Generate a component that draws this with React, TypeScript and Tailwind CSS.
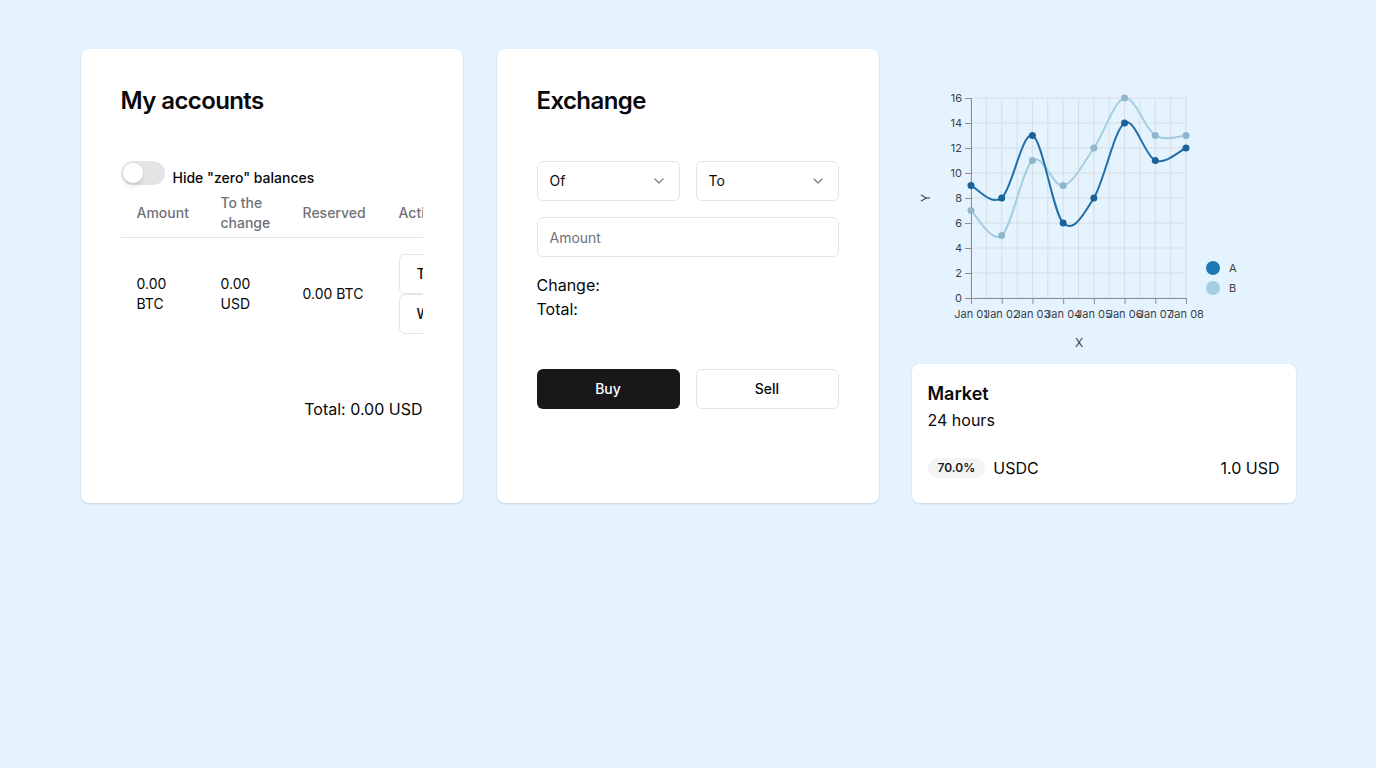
import React, { useState } from 'react';
import { ChevronDown } from 'lucide-react';

const labels = ['Jan 01', 'Jan 02', 'Jan 03', 'Jan 04', 'Jan 05', 'Jan 06', 'Jan 07', 'Jan 08'];
const seriesA = [9, 8, 13, 6, 8, 14, 11, 12];
const seriesB = [7, 5, 11, 9, 12, 16, 13, 13];

// plot box inside the svg
const X0 = 59;
const X1 = 274;
const Y0 = 249;
const Y1 = 49;
const xAt = (i: number) => X0 + ((X1 - X0) / 7) * i;
const yAt = (v: number) => Y0 - ((Y0 - Y1) / 16) * v;

// catmull-rom -> cubic bezier
const smoothPath = (vals: number[]) => {
  const pts = vals.map((v, i) => [xAt(i), yAt(v)]);
  let d = `M${pts[0][0]},${pts[0][1]}`;
  for (let i = 0; i < pts.length - 1; i++) {
    const p0 = pts[i - 1] || pts[i];
    const p1 = pts[i];
    const p2 = pts[i + 1];
    const p3 = pts[i + 2] || p2;
    const c1x = p1[0] + (p2[0] - p0[0]) / 6;
    const c1y = p1[1] + (p2[1] - p0[1]) / 6;
    const c2x = p2[0] - (p3[0] - p1[0]) / 6;
    const c2y = p2[1] - (p3[1] - p1[1]) / 6;
    d += ` C${c1x},${c1y} ${c2x},${c2y} ${p2[0]},${p2[1]}`;
  }
  return d;
};

const Chart: React.FC = () => {
  const yTicks = [0, 2, 4, 6, 8, 10, 12, 14, 16];
  return (
    <svg width="384" height="299" className="block" fontFamily="Inter, sans-serif">
      {/* grid */}
      {Array.from({ length: 15 }).map((_, i) => {
        const x = X0 + ((X1 - X0) / 14) * i;
        return <line key={'v' + i} x1={x} x2={x} y1={Y1} y2={Y0} stroke="#d9dde2" strokeWidth="1" />;
      })}
      {yTicks.map((t) => (
        <line key={'h' + t} x1={X0} x2={X1} y1={yAt(t)} y2={yAt(t)} stroke="#d9dde2" strokeWidth="1" />
      ))}
      {/* axes */}
      <path d={`M${X0 - 6},${Y1 + 0.5}H${X0 + 0.5}V${Y0 + 0.5}H${X0 - 6}`} fill="none" stroke="#8a8f96" />
      <path d={`M${X0 + 0.5},${Y0 + 6}V${Y0 + 0.5}H${X1 + 0.5}V${Y0 + 6}`} fill="none" stroke="#8a8f96" />
      {yTicks.map((t) => (
        <g key={'yt' + t}>
          <line x1={X0 - 6} x2={X0} y1={yAt(t) + 0.5} y2={yAt(t) + 0.5} stroke="#8a8f96" />
          <text x={X0 - 9} y={yAt(t)} dy="0.35em" textAnchor="end" fontSize="11" fill="#3f3f46">
            {t}
          </text>
        </g>
      ))}
      {labels.map((l, i) => (
        <g key={l}>
          <line x1={xAt(i) + 0.5} x2={xAt(i) + 0.5} y1={Y0} y2={Y0 + 6} stroke="#8a8f96" />
          <text x={xAt(i)} y={Y0 + 20} textAnchor="middle" fontSize="11" fill="#3f3f46">
            {l}
          </text>
        </g>
      ))}
      <text x="167" y="298" textAnchor="middle" fontSize="12" fill="#3f3f46">X</text>
      <text transform="translate(18,149) rotate(-90)" textAnchor="middle" fontSize="12" fill="#3f3f46">Y</text>

      {/* series */}
      <path d={smoothPath(seriesB)} fill="none" stroke="#a6cee3" strokeWidth="2" />
      {seriesB.map((v, i) => (
        <circle key={'b' + i} cx={xAt(i)} cy={yAt(v)} r="3.5" fill="#91b6cc" />
      ))}
      <path d={smoothPath(seriesA)} fill="none" stroke="#1f6fa9" strokeWidth="2" />
      {seriesA.map((v, i) => (
        <circle key={'a' + i} cx={xAt(i)} cy={yAt(v)} r="3.5" fill="#1a6399" />
      ))}

      {/* legend */}
      <circle cx="301" cy="219" r="7" fill="#1f78b4" />
      <text x="317" y="219" dy="0.35em" fontSize="11" fill="#3f3f46">A</text>
      <circle cx="301" cy="239" r="7" fill="#a6cee3" />
      <text x="317" y="239" dy="0.35em" fontSize="11" fill="#3f3f46">B</text>
    </svg>
  );
};

const Accounts: React.FC = () => {
  const [hideZero, setHideZero] = useState(false);
  return (
    <div className="bg-white rounded-lg shadow-sm px-10 pt-9">
      <h2 className="text-2xl leading-8 font-semibold tracking-tight text-[#09090b]">My accounts</h2>
      <div className="mt-11 flex items-start gap-2">
        <button
          onClick={() => setHideZero(!hideZero)}
          className={`w-11 h-6 rounded-full p-0.5 flex ${hideZero ? 'bg-[#18181b] justify-end' : 'bg-[#e4e4e7] justify-start'}`}
        >
          <span className="w-5 h-5 rounded-full bg-white shadow-md" />
        </button>
        <span className="pt-[7px] text-sm leading-5 font-medium text-[#09090b]">Hide "zero" balances</span>
      </div>
      <div className="mt-1 w-[302px] overflow-hidden">
        <table className="table-fixed w-[420px] text-sm text-left">
          <colgroup>
            <col className="w-[84px]" />
            <col className="w-[82px]" />
            <col className="w-[96px]" />
            <col className="w-[158px]" />
          </colgroup>
          <thead>
            <tr className="border-b border-[#e4e4e7] text-[#71717a]">
              <th className="px-4 pt-px pb-1 font-medium align-middle">Amount</th>
              <th className="px-4 pt-px pb-1 font-medium align-middle">To the change</th>
              <th className="px-4 pt-px pb-1 font-medium align-middle">Reserved</th>
              <th className="px-4 pt-px pb-1 font-medium align-middle whitespace-nowrap">Actions</th>
            </tr>
          </thead>
          <tbody className="text-[#09090b]">
            <tr>
              <td className="px-4 py-4 align-middle">0.00 BTC</td>
              <td className="px-4 py-4 align-middle">0.00 USD</td>
              <td className="px-4 py-4 align-middle whitespace-nowrap">0.00 BTC</td>
              <td className="px-4 py-4 align-middle">
                <div className="flex flex-col items-start">
                  <button className="h-10 px-[17px] rounded-md border border-[#e4e4e7] bg-white text-sm font-medium">Transfer</button>
                  <button className="h-10 px-[17px] rounded-md border border-[#e4e4e7] bg-white text-sm font-medium">Withdraw</button>
                </div>
              </td>
            </tr>
          </tbody>
        </table>
      </div>
      <p className="mt-[47px] text-right text-base leading-6 text-[#09090b]">Total: 0.00 USD</p>
    </div>
  );
};

const Exchange: React.FC = () => (
  <div className="ml-px bg-white rounded-lg shadow-sm px-10 pt-9">
    <h2 className="text-2xl leading-8 font-semibold tracking-tight text-[#09090b]">Exchange</h2>
    <div className="mt-11 grid grid-cols-2 gap-4">
      <button className="h-10 rounded-md border border-[#e4e4e7] px-3 flex items-center justify-between text-sm text-[#09090b]">
        Of
        <ChevronDown className="w-4 h-4 opacity-50" />
      </button>
      <button className="h-10 rounded-md border border-[#e4e4e7] px-3 flex items-center justify-between text-sm text-[#09090b]">
        To
        <ChevronDown className="w-4 h-4 opacity-50" />
      </button>
    </div>
    <input
      placeholder="Amount"
      className="mt-4 w-full h-10 rounded-md border border-[#e4e4e7] px-3 text-sm placeholder:text-[#71717a] outline-none"
    />
    <div className="mt-4 text-base leading-6 text-[#09090b]">
      <p>Change:</p>
      <p>Total:</p>
    </div>
    <div className="mt-12 grid grid-cols-2 gap-4">
      <button className="h-10 rounded-md bg-[#18181b] text-white text-sm font-medium">Buy</button>
      <button className="h-10 rounded-md border border-[#e4e4e7] bg-white text-sm font-medium text-[#09090b]">Sell</button>
    </div>
  </div>
);

const Market: React.FC = () => (
  <div className="bg-white rounded-lg shadow-sm px-4 pt-4 pb-[23px]">
    <h3 className="text-lg leading-7 font-semibold text-[#09090b]">Market</h3>
    <p className="text-base leading-6 text-[#09090b]">24 hours</p>
    <div className="mt-6 h-6 flex items-center justify-between">
      <div className="flex items-center gap-2">
        <span className="rounded-full bg-[#f4f4f5] px-2.5 py-0.5 text-xs font-semibold text-[#18181b]">70.0%</span>
        <span className="text-base text-[#09090b]">USDC</span>
      </div>
      <span className="text-base text-[#09090b]">1.0 USD</span>
    </div>
  </div>
);

export default function App() {
  return (
    <div className="min-h-screen bg-[#e5f3fe] font-['Inter',sans-serif] pt-[49px]">
      <div className="mx-auto w-[1215px] grid grid-cols-[382px_383px_384px] gap-x-[33px] gap-y-0">
        <Accounts />
        <Exchange />
        <div className="flex flex-col gap-4">
          <Chart />
          <Market />
        </div>
      </div>
    </div>
  );
}
